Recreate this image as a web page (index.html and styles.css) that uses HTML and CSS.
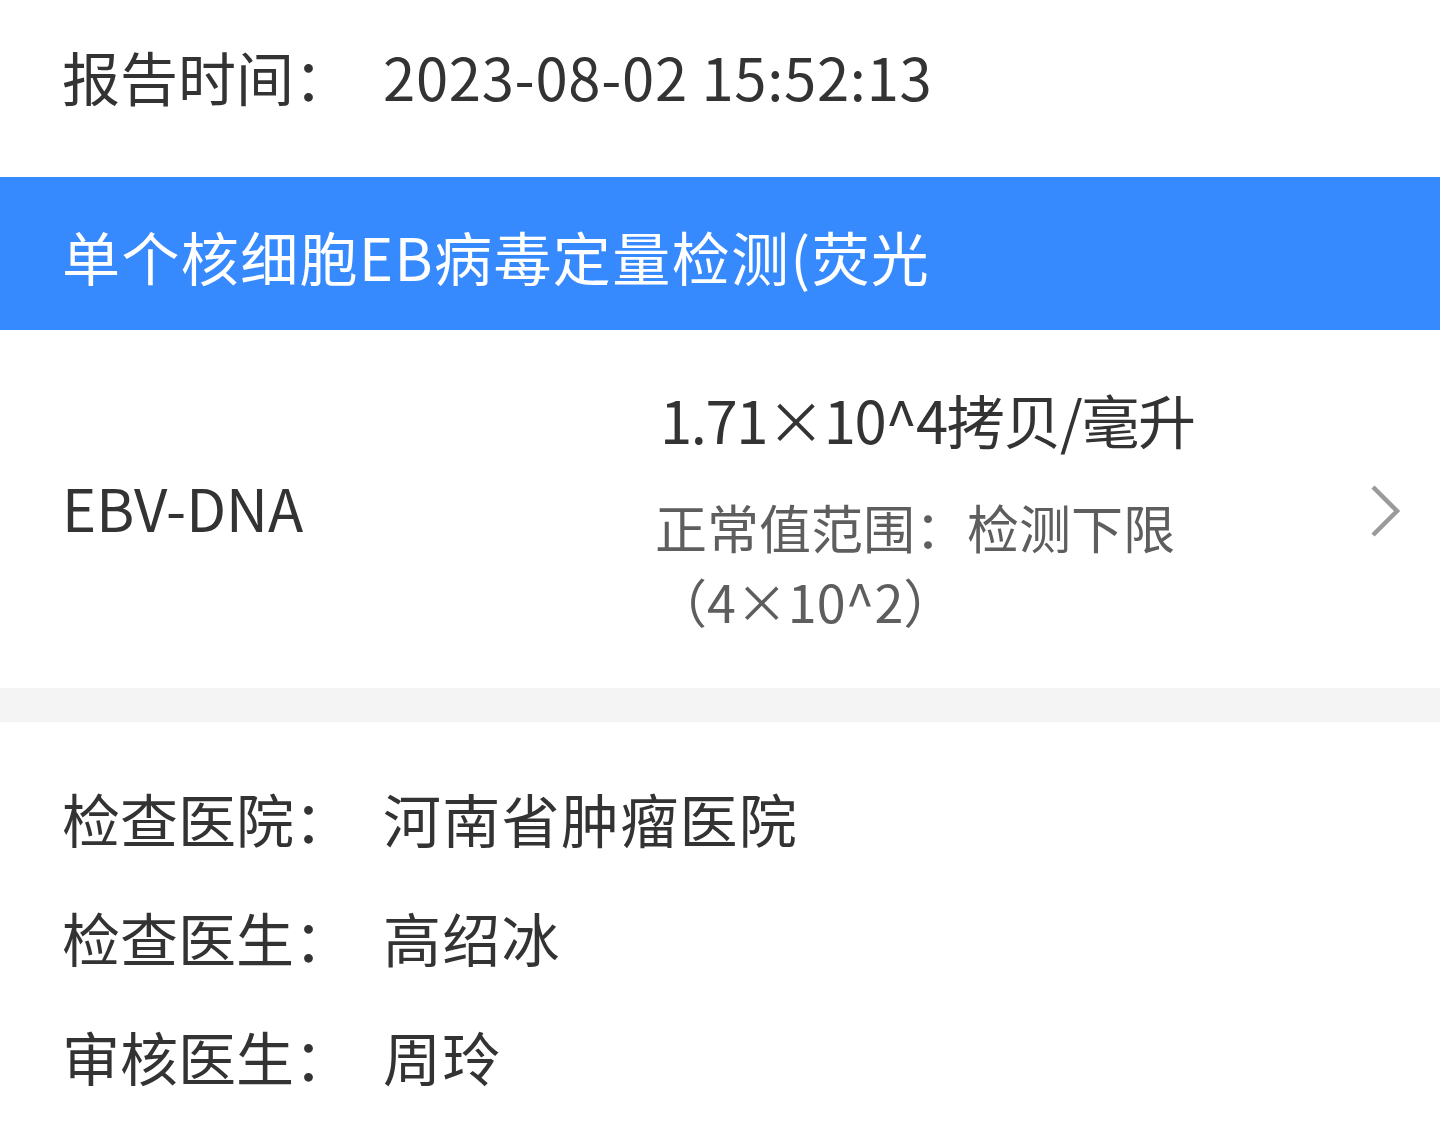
FILE: index.html
```html
<!DOCTYPE html>
<html lang="zh-CN">
<head>
<meta charset="utf-8">
<link rel="stylesheet" href="styles.css">
</head>
<body>
<div class="page">
  <div class="top-row">
    <span class="label">报告时间：</span>
    <span class="value date">2023-08-02 15:52:13</span>
  </div>
  <div class="banner">单个核细胞EB病毒定量检测(荧光</div>
  <div class="item">
    <div class="item-name">EBV-DNA</div>
    <div class="item-result">
      <div class="result-value">1.71×10^4拷贝/毫升</div>
      <div class="result-range">正常值范围：检测下限（4×10^2）</div>
    </div>
    <svg class="chevron" width="34" height="56" viewBox="0 0 34 56">
      <polyline points="4,4 28,28 4,52" fill="none" stroke="#9a9a9a" stroke-width="4.5" stroke-linecap="butt" stroke-linejoin="miter"/>
    </svg>
  </div>
  <div class="divider"></div>
  <div class="info">
    <div class="info-row"><span class="label">检查医院：</span><span class="value">河南省肿瘤医院</span></div>
    <div class="info-row"><span class="label">检查医生：</span><span class="value">高绍冰</span></div>
    <div class="info-row"><span class="label">审核医生：</span><span class="value">周玲</span></div>
  </div>
</div>
</body>
</html>
```
FILE: styles.css
```css
html, body {
  margin: 0;
  padding: 0;
  background: #ffffff;
}
body {
  font-family: "Noto Sans CJK SC", "Noto Sans", sans-serif;
  color: #333333;
  width: 1440px;
  height: 1137px;
  overflow: hidden;
}
.page {
  display: flex;
  flex-direction: column;
}
.top-row {
  height: 177px;
  display: flex;
  align-items: center;
  padding-left: 62px;
  font-size: 58px;
  line-height: 70px;
  padding-bottom: 26px;
  box-sizing: border-box;
}
.label {
  width: 321px;
  flex: none;
  white-space: nowrap;
}
.value {
  white-space: nowrap;
  letter-spacing: 1.3px;
}
.date {
  letter-spacing: 0.7px;
}
.banner {
  height: 153px;
  background: #378afd;
  color: #ffffff;
  font-size: 58px;
  display: flex;
  align-items: center;
  padding-left: 62px;
  padding-top: 4px;
  box-sizing: border-box;
  white-space: nowrap;
  letter-spacing: 1.4px;
}
.item {
  height: 358px;
  display: flex;
  align-items: center;
  padding-left: 62px;
  box-sizing: border-box;
}
.item-name {
  width: 593px;
  flex: none;
  font-size: 58px;
  line-height: 70px;
  padding-bottom: 4px;
}
.item-result {
  width: 540px;
  flex: none;
  padding-top: 4px;
}
.result-value {
  font-size: 58px;
  line-height: 70px;
  color: #333333;
  padding-left: 5px;
  white-space: nowrap;
  letter-spacing: -1.4px;
}
.result-range {
  margin-top: 36px;
  font-size: 52px;
  line-height: 74px;
  color: #5e5e5e;
}
.chevron {
  margin-left: 174px;
  margin-top: 4px;
  flex: none;
}
.divider {
  height: 34px;
  background: #f4f4f4;
}
.info {
  padding-top: 36px;
  padding-left: 62px;
  display: flex;
  flex-direction: column;
}
.info-row {
  height: 119px;
  display: flex;
  align-items: center;
  font-size: 58px;
  line-height: 70px;
}
```
